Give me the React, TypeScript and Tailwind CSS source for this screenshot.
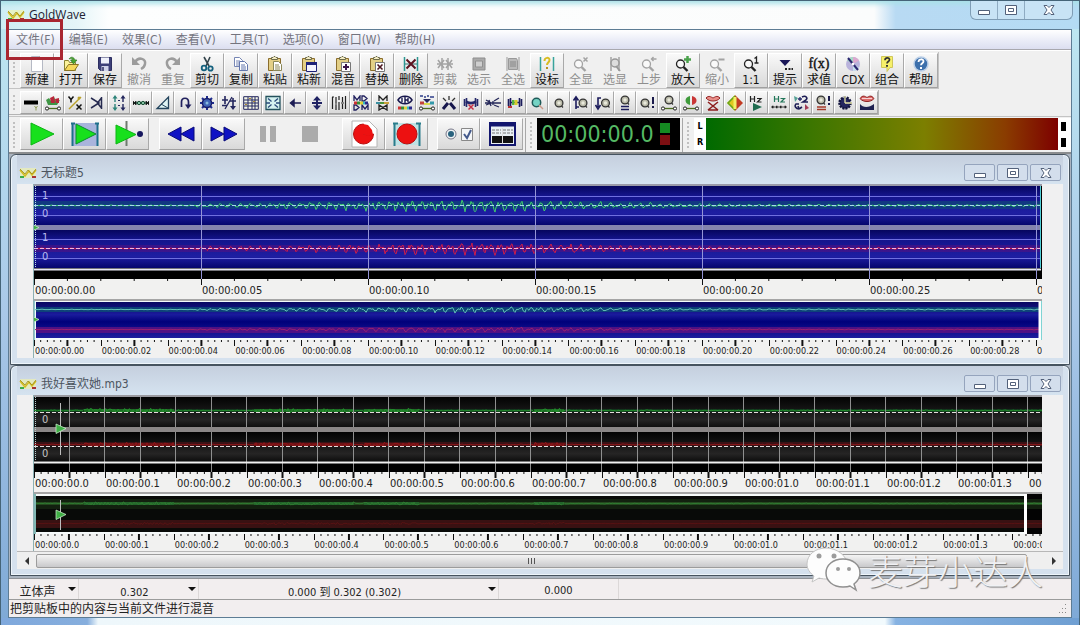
import type { ReactNode } from 'react'
import clsx from 'clsx'

interface ToolItem {
  label: string
  icon: ReactNode
  disabled?: boolean
}

interface EffectItem {
  name: string
  icon: ReactNode
}

const menuItems = ['文件(F)', '编辑(E)', '效果(C)', '查看(V)', '工具(T)', '选项(O)', '窗口(W)', '帮助(H)']

// ---- main toolbar icons (16x16) ----

const Clipboard = ({ children }: { children?: ReactNode }) => (
  <>
    <path d="M1.500 2.500h12v12h-12z" fill="#e3cf86" stroke="#8a6d2c" />
    <path d="M4.500 3.500v-2h1.500l1-1h1l1 1h1.500v2z" fill="#f4edc4" stroke="#6d6b4a" />
    {children}
  </>
)

const Lens = ({ color = '#222', children }: { color?: string; children?: ReactNode }) => (
  <>
    <circle cx="5.500" cy="8" r="4" fill="#fff" fillOpacity=".6" stroke={color} strokeWidth="1.300" />
    <path d="M8.500 11l4 4" stroke={color} strokeWidth="2.400" />
    {children}
  </>
)

const Page = ({ x, y, color }: { x: number; y: number; color: string }) => (
  <g transform={`translate(${x} ${y})`}>
    <path d="M.5.5h5l3 3v6h-8z" fill="#fff" stroke={color} />
    <path d="M2 4h4M2 6h5M2 8h5" stroke={color} />
  </g>
)

const tools: ToolItem[] = [
  { label: '新建', icon: <><path d="M2.500.5h8l3 3v12h-11z" fill="#fff" stroke="#b5b9c4" /><path d="M10.500.5v3h3" fill="#c9a9a9" stroke="#a08c94" /></> },
  { label: '打开', icon: <><path d="M1.500 14.500v-10h4l1 2h6v8z" fill="#fbf39b" stroke="#8a8433" /><path d="M1.500 14.500l4-6h10l-4 6z" fill="#f6d95a" stroke="#8a7423" /><path d="M6 3c2-3 5-2 6 1h2l-3.500 4-3-4h2c-.6-1.400-1.500-1.800-3.500-1z" fill="#49a530" stroke="#2c6f20" strokeWidth=".6" /></> },
  { label: '保存', icon: <><path d="M1.500 1.500h13v13h-11l-2-2z" fill="#3c3f78" stroke="#2c2e60" /><path d="M4 1.500h8v6H4z" fill="#eef0fa" /><path d="M4.500 10h7v5h-7z" fill="#cfd3ea" /><path d="M6 11v4" stroke="#2c2e60" strokeWidth="1.500" /></> },
  { label: '撤消', disabled: true, icon: <><path d="M4 6c4-6 11-3 10 2-.5 3-2 4-4 5" fill="none" stroke="#9c9c9c" strokeWidth="2.500" /><path d="M1 1v8h8z" fill="#9c9c9c" /></> },
  { label: '重复', disabled: true, icon: <><path d="M12 6C8 0 1 3 2 8c.5 3 2 4 4 5" fill="none" stroke="#9c9c9c" strokeWidth="2.500" /><path d="M15 1v8H7z" fill="#9c9c9c" /></> },
  { label: '剪切', icon: <><path d="M5 1l5 9M11 1L7 10" stroke="#34454d" strokeWidth="1.600" /><circle cx="5" cy="12" r="2.300" fill="none" stroke="#13607d" strokeWidth="1.800" /><circle cx="11.500" cy="12.500" r="2.200" fill="none" stroke="#13607d" strokeWidth="1.800" /></> },
  { label: '复制', icon: <><Page x={1} y={1} color="#7686b4" /><Page x={6} y={5} color="#6376ac" /></> },
  { label: '粘贴', icon: <Clipboard><Page x={6} y={5} color="#8a8758" /></Clipboard> },
  { label: '粘新', icon: <Clipboard><path d="M5.500 6.500h10v9h-10z" fill="#f4f4ff" stroke="#1d2178" /><path d="M5 7.500h11" stroke="#1d2178" strokeWidth="3" /></Clipboard> },
  { label: '混音', icon: <Clipboard><path d="M6.500 6.500h9v9h-9z" fill="#fff" stroke="#777" /><path d="M11 8v6M8 11h6" stroke="#3b174b" strokeWidth="2" /></Clipboard> },
  { label: '替换', icon: <Clipboard><path d="M6.500 6.500h9v9h-9z" fill="#fff" stroke="#777" /><path d="M8.500 8.500l5 5m0-5l-5 5" stroke="#4b1720" strokeWidth="1.600" /></Clipboard> },
  { label: '删除', icon: <><path d="M1.500 1v14M14.500 1v14" stroke="#2d9792" strokeWidth="1.500" /><path d="M2 8h12" stroke="#377" /><path d="M3.500 3.500l9 9m0-9l-9 9" stroke="#5b1320" strokeWidth="2" /></> },
  { label: '剪裁', disabled: true, icon: <><path d="M0 8h16M5 2v12M11 2v12" stroke="#a3a3a3" strokeWidth="1.500" /><path d="M1 4l6 8M1 12l6-8M9 4l6 8M9 12l6-8" stroke="#a3a3a3" strokeWidth="1.500" /></> },
  { label: '选示', disabled: true, icon: <><path d="M2 2h12v12H2z" fill="#aaa" stroke="#8d8d8d" /><path d="M4.500 5h7v6h-7z" fill="#cecece" stroke="#909090" /></> },
  { label: '全选', disabled: true, icon: <><path d="M2 1v14M14 1v14" stroke="#999" /><path d="M3.500 2.500h8l1 2v9h-9z" fill="#b9b9b9" stroke="#999" /><path d="M5 6h6M5 8h6M5 10h6" stroke="#888" /></> },
  { label: '设标', icon: <><path d="M1.500 1v14M14.500 1v14" stroke="#38a39b" strokeWidth="1.500" /><path d="M5.500 5c0-4 5-4 5-1 0 2.500-2.500 2.500-2.500 5" fill="none" stroke="#d9bd22" strokeWidth="2" /><path d="M7 11h2v2H7z" fill="#b8931a" /></> },
  { label: '全显', disabled: true, icon: <Lens color="#a3a3a3"><path d="M10.500 1.500l4 4m0-4l-4 4" stroke="#a3a3a3" strokeWidth="1.500" /></Lens> },
  { label: '选显', disabled: true, icon: <><path d="M4 1v14M12 1v14" stroke="#a3a3a3" strokeWidth="1.500" /><circle cx="8" cy="7" r="4" fill="#ddd" stroke="#999" strokeWidth="1.500" /><path d="M9 10l4 5" stroke="#999" strokeWidth="2" /></> },
  { label: '上步', disabled: true, icon: <Lens color="#a3a3a3"><path d="M15.500 3h-5m2-2l-2 2 2 2" fill="none" stroke="#a3a3a3" strokeWidth="1.400" /></Lens> },
  { label: '放大', icon: <Lens><path d="M12.500 0v7M9 3.500h7" stroke="#4ba24c" strokeWidth="2.500" /></Lens> },
  { label: '缩小', disabled: true, icon: <Lens color="#a3a3a3"><path d="M9.500 3.500h6" stroke="#a3a3a3" strokeWidth="2" /></Lens> },
  { label: '1:1', icon: <Lens><path d="M11.500 2.500l2-1.500v6m-2 0h4" fill="none" stroke="#222" strokeWidth="1.300" /></Lens> },
  { label: '提示', icon: <><path d="M2.500 4h11L8 10z" fill="#1b1859" /><path d="M8 12h2v2H8zM11.500 12h2v2h-2zM14.500 12h1.500v2h-1.500z" fill="#222" /></> },
  { label: '求值', icon: <text x="8" y="12" textAnchor="middle" fontSize="14" fontFamily="Liberation Serif, serif" fill="#111" stroke="#111" strokeWidth=".4">f(x)</text> },
  { label: 'CDX', icon: <><circle cx="8" cy="8" r="7" fill="#b9b3dc" /><path d="M8 8L2 4.500A7 7 0 018 1z" fill="#a8dbc6" /><path d="M8 8l6 3.500A7 7 0 018 15z" fill="#c5e2ee" /><path d="M8 8V1a7 7 0 016 3.500z" fill="#dba9cf" /><path d="M3 2l10 12" stroke="#2a2670" strokeWidth="2" /><circle cx="8" cy="8" r="1.500" fill="#fff" /></> },
  { label: '组合', icon: <><path d="M2.500.5h11v11H11l-3 4v-4H2.500z" fill="#f6f06a" stroke="#cfc65a" /><path d="M6 4.200c0-3 4.500-3 4.500-.5 0 1.800-2.500 1.800-2.500 3.800" fill="none" stroke="#333" strokeWidth="1.700" /><path d="M7 9h2v1.700H7z" fill="#333" /></> },
  { label: '帮助', icon: <><circle cx="8" cy="8" r="7" fill="#3d70ac" stroke="#bcd0e8" strokeWidth="1.500" /><path d="M5.500 6c0-3.500 5-3.500 5-.8C10.500 7.200 8 7.200 8 9.300" fill="none" stroke="#fff" strokeWidth="1.800" /><path d="M7 11h2v2H7z" fill="#fff" /></> },
]

// ---- effect toolbar icons (16x16) ----

const Knob = ({ x = 8, y = 8, color = '#b9b9a8' }: { x?: number; y?: number; color?: string }) => (
  <>
    <circle cx={x} cy={y} r="3.900" fill={color} stroke="#333" strokeWidth="1.300" />
    <circle cx={x} cy={y} r="1.700" fill="#e9e9dc" />
    <path d={`M${x + 2.5} ${y + 3}l1.500 1.500`} stroke="#333" strokeWidth="1.300" />
  </>
)

const SliderBase = () => (
  <>
    <path d="M2 13.500h12" stroke="#4d6e1f" strokeWidth="1.300" />
    <circle cx="2" cy="13.500" r="1.600" fill="#fff" stroke="#222" />
    <circle cx="14" cy="13.500" r="1.600" fill="#fff" stroke="#222" />
  </>
)

const ColorStrip = ({ y }: { y: number }) => (
  <>
    <path d={`M1 ${y}h3`} stroke="#c33" strokeWidth="3" />
    <path d={`M4 ${y}h3`} stroke="#3a8a35" strokeWidth="3" />
    <path d={`M7 ${y}h3`} stroke="#dfd238" strokeWidth="3" />
    <path d={`M10 ${y}h2`} stroke="#37b7c4" strokeWidth="3" />
    <path d={`M12 ${y}h3`} stroke="#2b2a8c" strokeWidth="3" />
  </>
)

const Barbell = ({ color }: { color: string }) => (
  <path d="M1.500 4v7M3.500 3v9M12.500 3v9M14.500 4v7M3 7.500h10" stroke={color} strokeWidth="1.600" />
)

const Bang = () => <path d="M14 2v7M14 11v2" stroke="#1a1a4b" strokeWidth="2" />

const effects: EffectItem[] = [
  { name: '审查', icon: <><path d="M1 5.500h14v4H1z" fill="#000" /><path d="M11.500 11l1.500 2 1.500-2M13 13v2.500" fill="none" stroke="#8f9a55" /></> },
  { name: '音道混合', icon: <><path d="M1 5l3-2 2 3 3-4 2 4 4-1-3 5H3z" fill="#3f9644" /><path d="M5 3l4-2 1 7H6zM10 4l4-1v5h-3z" fill="#b8263a" /><SliderBase /></> },
  { name: '音道运算', icon: <><path d="M1.500 1.500l2.500 3 2.500-3M4 4v3.500" fill="none" stroke="#111" strokeWidth="1.500" /><path d="M2 14L14 2" stroke="#b9a12b" strokeWidth="1.500" /><circle cx="12" cy="3" r="1.500" fill="#b9a12b" /><path d="M9.500 9.500l5 5m0-5l-5 5" stroke="#111" strokeWidth="1.500" /></> },
  { name: '压缩器', icon: <path d="M2 3l8 5-8 5M12.500 2v12M12 3.500L8.500 8l3.500 4.500" fill="none" stroke="#25294f" strokeWidth="1.500" /> },
  { name: '扩展器', icon: <><path d="M4 0l2.500 3.500h-5zM3.300 3h1.400v4H3.300zM4 16l-2.500-3.500h5zM3.300 9h1.400v4H3.300z" fill="#2c8379" /><path d="M12 0l2.500 3.500h-5zM11.300 3h1.400v4h-1.400zM12 16l-2.500-3.500h5zM11.300 9h1.400v4h-1.400zM7 5h2v1H7zM7 10h2v1H7z" fill="#22265c" /></> },
  { name: '多普勒', icon: <><path d="M0 8h16" stroke="#2c7656" strokeWidth="1.500" /><path d="M0 6l3 4V6L0 10zM16 6l-3 4V6l3 4z" fill="#111" stroke="#111" strokeWidth=".7" /><circle cx="6" cy="8" r="1.700" fill="#83bfa0" stroke="#184d34" /><circle cx="10" cy="8" r="1.700" fill="#83bfa0" stroke="#184d34" /></> },
  { name: '动态', icon: <><path d="M13.500 2v11.500H2z" fill="#dff4f4" stroke="#24445d" strokeWidth="1.300" /><path d="M6 9l7 4" stroke="#24445d" /></> },
  { name: '回声', icon: <><path d="M4.500 12V7c0-5 7-5 7 0v3" fill="none" stroke="#21215e" strokeWidth="1.700" /><path d="M8 9.500h6.500L11 14z" fill="#21215e" /></> },
  { name: '滤波', icon: <><path d="M8 1v14M1 8h14M3 3l10 10M13 3L3 13" stroke="#1f2d8f" strokeWidth="2" /><circle cx="8" cy="8" r="4.600" fill="#3f63b5" stroke="#181c6a" strokeWidth="1.500" /><circle cx="8" cy="8" r="1.500" fill="#8bd" /></> },
  { name: '音量比例', icon: <><path d="M1 5h6M4 1v8M1 10.500h5M9 6h6M12 3v9" stroke="#23265e" strokeWidth="1.600" /><path d="M4 14L11 2" stroke="#23265e" strokeWidth="1.300" /><path d="M9 11h6l-3 4z" fill="#23265e" /></> },
  { name: '均衡表', icon: <><path d="M.7 1.700h14.600v12.600H.7z" fill="#f4f7e8" stroke="#23265e" /><path d="M1 5h14M1 8h14M1 11h14M5 2v12M9 2v12M12 2v12" stroke="#23265e" /><path d="M6 3h2v1H6zM10 6h2v1h-2zM2 9h2v1H2z" fill="#a83" /></> },
  { name: '立体声', icon: <><path d="M1 1.500h14v13H1z" fill="#d5f2f0" stroke="#23515c" strokeWidth="1.300" /><path d="M3 3.500l3.500 3M13 3.500l-3.500 3M3 12.500l3.500-3M13 12.500l-3.500-3M1 8h4M15 8h-4" stroke="#2a4b7a" strokeWidth="1.300" /></> },
  { name: '反转', icon: <path d="M14 8H4M7 5L3.500 8 7 11z" fill="#1c1c54" stroke="#1c1c54" strokeWidth="1.500" /> },
  { name: '反相', icon: <path d="M8 1l4 4.500H9v1.500h4v2H9v1.500h3L8 15l-4-4.500h3V9H3V7h4V5.500H4z" fill="#1f2263" /> },
  { name: '静音缩减', icon: <path d="M1.500 2v12M5 2v6M5 10v5M8 1v4M8 7v8M11.500 2v5M11.500 9v5M14.500 1v13M1 2h2M4 9h2M10 8h3" stroke="#222" strokeWidth="1.200" /> },
  { name: '音调', icon: <><path d="M1 6V1l3 4 3-4v5M9 6V1h2l3 2.500L11 6zM1 15v-5h2l3 2.500L3 15zM9 15v-5l3 4 3-4v5" fill="none" stroke="#20205e" strokeWidth="1.300" /><ColorStrip y={8} /></> },
  { name: '均衡器', icon: <><path d="M4 6V1l4 4 4-4v5M4 15v-5l4 2.500L4 15zM12 10v5l-4-2.500z" fill="none" stroke="#222" strokeWidth="1.300" /><path d="M1 8h4" stroke="#3b8fa0" strokeWidth="2" /><path d="M5 8h4" stroke="#4c9438" strokeWidth="2" /><path d="M9 8h5" stroke="#c9a23a" strokeWidth="2" /></> },
  { name: '参数均衡', icon: <><path d="M1 5c3-5 11-5 14 0-3 5-11 5-14 0z" fill="#fff" stroke="#16164c" strokeWidth="1.500" /><path d="M8 2v6M5 3v4M11 3v4M8 5h3" stroke="#16164c" strokeWidth="1.400" /><ColorStrip y={13} /></> },
  { name: '频谱滤波', icon: <><path d="M1 1h3M5 2h2M8 1h2M11 2h4" stroke="#2e3e8a" strokeWidth="1.500" /><path d="M4 4h8L8 8z" fill="#25275e" /><path d="M1 8h4" stroke="#c3443a" strokeWidth="3" /><path d="M5 9h6" stroke="#d9dc4b" strokeWidth="2" /><path d="M11 8h4" stroke="#39a" strokeWidth="3" /><SliderBase /></> },
  { name: '爆音消除', icon: <><path d="M2 14l5-6M14 14L9 8" stroke="#16164c" strokeWidth="3" /><path d="M8 1v4M2 3l3 3M14 3l-3 3" stroke="#333" strokeWidth="1.300" /></> },
  { name: '降噪', icon: <><Barbell color="#25286a" /><path d="M3 6.500c3 2 7 2 10 0" fill="none" stroke="#25286a" strokeWidth="2.500" /><path d="M5.500 9.500l5 5m0-5l-5 5" stroke="#c43246" strokeWidth="1.500" /></> },
  { name: '平滑器', icon: <path d="M0 8h16M1 5l5 3-5 2M4 5l2 6M9 6l5-3M9 10l5 2M8 6v4" fill="none" stroke="#25285a" strokeWidth="1.300" /> },
  { name: '静音', icon: <><Barbell color="#1c1d5c" /><path d="M5 5h2.500v5H5z" fill="#53b341" /><path d="M7.500 5h3v5h-3z" fill="#d5cf2b" /><path d="M1 11h4v2H1z" fill="#b33" /></> },
  { name: '自动增益', icon: <><circle cx="7.500" cy="7.500" r="4.200" fill="#75d3c4" stroke="#1f5a58" strokeWidth="1.500" /><path d="M10 10l4 4" stroke="#c98" strokeWidth="1.500" /></> },
  { name: '音量', icon: <Knob /> },
  { name: '淡入', icon: <><Knob x={10} /><path d="M3 14V3M.5 5.500L3 2l2.500 3.500M3 12h3" fill="none" stroke="#1c1c5c" strokeWidth="1.600" /></> },
  { name: '淡出', icon: <><Knob x={10.5} /><path d="M6 3H3v9M.5 10L3 14l2.500-4" fill="none" stroke="#1c1c5c" strokeWidth="1.600" /></> },
  { name: '匹配音量', icon: <><Knob y={5} /><path d="M4 11.500h8M4 14.500h8" stroke="#1c1c5c" strokeWidth="1.600" /></> },
  { name: '最大化音量', icon: <><Knob x={6} /><Bang /></> },
  { name: '音量形状', icon: <><Knob y={5} /><SliderBase /></> },
  { name: '声像', icon: <><path d="M7 1v9C1 9 1 2 7 1z" fill="#3f9b3b" /><path d="M9 1v9c6-1 6-8 0-9z" fill="#c93636" /><SliderBase /></> },
  { name: '人声消除', icon: <><path d="M1 3c3-3 5-1 7 0 2-1 4-3 7 0-3 4-11 4-14 0z" fill="#e98e88" stroke="#942323" /><path d="M3 7l10 8M13 7L3 15M3 15h10" stroke="#8c1e1e" strokeWidth="1.600" /></> },
  { name: '立体声宽度', icon: <><path d="M8 0v16L0 8z" fill="#dfc81e" /><path d="M8 0v16l8-8z" fill="#c23a22" /><path d="M8 1L1 8l7 7" fill="none" stroke="#63a51c" strokeWidth="1.500" /><path d="M8 2v12" stroke="#f2ef67" strokeWidth="3" /></> },
  { name: '播放速率', icon: <><path d="M1.500 1v6M1.500 4h4M5.500 1v6M8 3.500h4L8.500 7h4" fill="none" stroke="#222" strokeWidth="1.200" /><path d="M4 8l9 4-9 4z" fill="#1f6c4f" /></> },
  { name: '重新采样', icon: <><path d="M3.500 1v6M3.500 4h4M7.500 1v6M9.500 3.500h4L10 7h4" fill="none" stroke="#23775a" strokeWidth="1.200" /><path d="M0 12h16" stroke="#444" /><path d="M1 12h1.500M5 12h1.500M9 12h1.500M13.500 12H15" stroke="#222" strokeWidth="2.500" /></> },
  { name: '时间弯曲', icon: <><path d="M1 1l4 2-3 4z" fill="#55a095" /><path d="M5 4h4M7 2v4" stroke="#25286a" strokeWidth="1.300" /><path d="M9 2c4-2 6 1 4 3l-3 2h5M6 9H3c-2 2 0 5 3 5M6 14l-1-3M6 14l3-2" fill="none" stroke="#1d1d55" strokeWidth="1.600" /><path d="M12 9l4 4-4 2z" fill="#a33c55" /></> },
  { name: '偏移', icon: <><Knob x={6} y={5} /><path d="M14 1v5M14 8v2" stroke="#1a1a4b" strokeWidth="2" /><path d="M2 12h9M2 14.500h9" stroke="#a43a2a" strokeWidth="1.500" /></> },
  { name: '定时', icon: <><circle cx="8" cy="8" r="5.500" fill="#25275f" stroke="#14163f" strokeWidth="2.500" strokeDasharray="2 1" /><path d="M8 8V1M8 8h7" stroke="#e9e7a8" strokeWidth="1.300" /></> },
  { name: '语音', icon: <><path d="M1 3.500c3-4 5-2 7-1 2-1 4-3 7 1-3 4-11 4-14 0z" fill="#df6d6d" stroke="#8c2020" /><path d="M3 3.500h10" stroke="#f6d4d4" /><path d="M1 15V9c3 4 9 4 14 0v6z" fill="#1d2050" /></> },
]

// ---- waveform generation ----

// Fixed-seed pseudo random so the trace is stable between renders
const noise = (n: number) => {
  const v = Math.sin(n * 12.9898) * 43758.5453
  return (v - Math.floor(v)) * 2 - 1
}

const wavePath = (mid: number, gain: number, seed: number) => {
  let d = `M0 ${mid}`
  for (let x = 1; x <= 1006; x++) {
    const t = x < 430 ? (x - 430) / 190 : (x - 430) / 170
    const env = x < 160 ? 0.1 : 0.2 + Math.exp(-t * t)
    const v = Math.sin(x * 0.63) * 0.55 + Math.sin(x * 1.27 + 1) * 0.35 + noise(x + seed) * 0.35
    d += `L${x} ${(mid + v * env * gain).toFixed(1)}`
  }
  return d
}

const bursts = [[50, 140], [220, 320], [330, 385], [500, 530]]

const burstPath = (mid: number, gain: number, seed: number) => {
  let d = `M0 ${mid}`
  for (let x = 1; x <= 1008; x++) {
    const loud = bursts.some(([from, to]) => x >= from && x <= to)
    const amp = loud ? 1 : 0.25
    d += `L${x} ${(mid + noise(x + seed) * amp * gain).toFixed(1)}`
  }
  return d
}

const burstBand = (y: number, height: number) =>
  bursts.map(([from, to]) => `M${from} ${y}h${to - from}v${height}h${from - to}z`).join('')

const range = (count: number) => Array.from({ length: count }, (_, i) => i)

const GoldWaveLogo = () => (
  <svg className="h-4 w-[18px] shrink-0" viewBox="0 0 18 16" fill="none">
    <path d="M1 3h16v10H1z" fill="#f2f3a6" fillOpacity=".6" />
    <path d="M1 5l5 6 4-5 3 4 4-5" stroke="#d3bc22" strokeWidth="1.500" />
    <path d="M1 4l5 5 3-4 4 4 4-5" stroke="#9a8a1c" strokeWidth=".8" />
    <path d="M1 12h4" stroke="#3cae4a" strokeWidth="2" />
    <path d="M13 12h4" stroke="#a33" strokeWidth="2" />
  </svg>
)

const WindowGlyph = ({ kind }: { kind: 'min' | 'max' | 'close' }) => (
  <svg className="h-3 w-3" viewBox="0 0 12 12" fill="none" stroke="#53617a">
    {kind === 'min' && <path d="M.5 6.500h11v4H.5z" fill="#fff" />}
    {kind === 'max' && (
      <>
        <path d="M.5 1.500h11v9H.5z" fill="#fff" />
        <path d="M3.500 4.500h5v3h-5z" />
      </>
    )}
    {kind === 'close' && <path d="M1 1.500h3l2 2 2-2h3L8 6l3 4.500H8l-2-2-2 2H1L4 6z" fill="#fff" />}
  </svg>
)

const Grip = () => <div className="my-1 mr-[5px] ml-1 w-0.5 self-stretch border-l-2 border-dotted border-[#c0c0c0]" />

const Triangle = () => <path d="M0 0l10 4.500-10 5z" fill="#3fae46" stroke="#d5f5d5" strokeWidth=".7" />

interface RulerProps {
  labels: string[]
  step: number
  ticks: number
  boldEvery: number
  small?: boolean
}

function Ruler({ labels, step, ticks, boldEvery, small }: RulerProps) {
  return (
    <div className={clsx('flex overflow-hidden bg-[#f1f1f0]', small ? 'h-[17px]' : 'h-5')}>
      {labels.map((label) => (
        <div key={label} className="shrink-0" style={{ width: `${(step / 1008) * 100}%` }}>
          <svg className="block h-1.5 w-full" stroke="#111">
            {range(ticks).map((i) => (
              <line
                key={i}
                x1={`${(i / ticks) * 100}%`}
                x2={`${(i / ticks) * 100}%`}
                y1="0"
                y2={i % boldEvery === 0 ? 6 : 2}
                strokeWidth={i % boldEvery === 0 ? 2 : 1}
              />
            ))}
          </svg>
          <div
            className={clsx(
              'pl-px whitespace-nowrap text-[#222]',
              small ? 'text-[9px] leading-[10px]' : 'text-[11px] leading-[11px]',
            )}
          >
            {label}
          </div>
        </div>
      ))}
    </div>
  )
}

function BluePlot() {
  return (
    <div className="relative border-t-2 border-[#9a9aa8]">
      <svg className="block h-[93px] w-full" viewBox="0 0 1008 93" preserveAspectRatio="none" fill="none">
        <defs>
          <linearGradient id="blue" x1="0" y1="0" x2="0" y2="1">
            <stop offset="0" stopColor="#06065e" />
            <stop offset=".25" stopColor="#14148c" />
            <stop offset=".7" stopColor="#1e1ea2" />
            <stop offset="1" stopColor="#06066c" />
          </linearGradient>
        </defs>
        <path d="M0 0h1008v93H0z" fill="#000" />
        <path d="M0 0h1007v39H0z" fill="url(#blue)" />
        <path d="M0 44h1007v38H0z" fill="url(#blue)" />
        <path d="M0 15h1007v8H0z" fill="#0d4f77" fillOpacity=".6" />
        <path d="M0 59h1007v7H0z" fill="#551080" fillOpacity=".55" />
        <path d="M0 10.500h1007M0 29.500h1007M0 53.500h1007M0 72.500h1007" stroke="#6f6fe0" />
        <path d="M0 41.500h1007" stroke="#8584ad" strokeWidth="5" />
        <path d={wavePath(19.5, 5, 3)} stroke="#3fd06b" />
        <path d={wavePath(62.5, 5, 90)} stroke="#d01c48" />
        <path d="M0 19.500h1007" stroke="#a5dbe8" strokeDasharray="4 2" />
        <path d="M0 62.500h1007" stroke="#f3b6df" strokeDasharray="4 2" />
        <path d="M0 83.500h1007" stroke="#e9e9f4" strokeWidth="2" />
        {range(6).map((i) => (
          <path key={i} d={`M${(i + 1) * 167 + 0.5} 0v93`} stroke="#9494d6" />
        ))}
        <path d="M1.500 0v82" stroke="#b7d9ec" strokeDasharray="1 1" />
        <path d="M1006.500 0v82" stroke="#4fd0d8" />
        <g transform="translate(-5 37)">
          <Triangle />
        </g>
      </svg>
      <span className="absolute top-1 left-2 text-[11px] leading-3 text-[#b9b9ee]">1</span>
      <span className="absolute top-[22px] left-2 text-[11px] leading-3 text-[#b9b9ee]">0</span>
      <span className="absolute top-[46px] left-2 text-[11px] leading-3 text-[#b9b9ee]">1</span>
      <span className="absolute top-[65px] left-2 text-[11px] leading-3 text-[#b9b9ee]">0</span>
    </div>
  )
}

function BlueOverview() {
  return (
    <div className="border-t-2 border-[#a5a5a5]">
      <svg className="block h-[39px] w-full" viewBox="0 0 1008 39" preserveAspectRatio="none" fill="none">
        <defs>
          <linearGradient id="blueOver" x1="0" y1="0" x2="0" y2="1">
            <stop offset="0" stopColor="#080860" />
            <stop offset=".35" stopColor="#1a1a9c" />
            <stop offset=".55" stopColor="#00007a" />
            <stop offset="1" stopColor="#1d1d9e" />
          </linearGradient>
        </defs>
        <path d="M0 0h1008v39H0z" fill="#f4fbfb" />
        <path d="M2 1h1003v36H2z" fill="url(#blueOver)" />
        <path d="M2 6h1003v5H2z" fill="#0b5472" fillOpacity=".7" />
        <path d="M2 26h1003v6H2z" fill="#5f1282" fillOpacity=".8" />
        <path d={wavePath(8.5, 2.5, 40)} stroke="#62c2b6" />
        <path d={wavePath(28.5, 2, 55)} stroke="#96216f" />
        <path d="M1005.500 0v39" stroke="#fff" strokeWidth="2" />
        <path d="M1007.500 0v39" stroke="#7fd4d4" />
        <path d="M.5 0v39" stroke="#8cc9cc" />
        <g transform="translate(-5 14)">
          <Triangle />
        </g>
      </svg>
    </div>
  )
}

function DarkPlot() {
  return (
    <div className="relative border-t-2 border-[#9a9aa0]">
      <svg className="block h-[75px] w-full" viewBox="0 0 1008 75" preserveAspectRatio="none" fill="none">
        <defs>
          <linearGradient id="dark" x1="0" y1="0" x2="0" y2="1">
            <stop offset="0" stopColor="#030303" />
            <stop offset=".45" stopColor="#161616" />
            <stop offset=".75" stopColor="#262525" />
            <stop offset="1" stopColor="#0e0e0e" />
          </linearGradient>
        </defs>
        <path d="M0 0h1008v75H0z" fill="#000" />
        <path d="M0 0h1008v30H0z" fill="url(#dark)" />
        <path d="M0 35h1008v29H0z" fill="url(#dark)" />
        <path d="M0 12h1008v3H0z" fill="#11371c" />
        <path d="M0 45h1008v4H0z" fill="#3a1216" />
        <path d={burstBand(12, 3)} fill="#1d6c25" />
        <path d={burstBand(46, 3)} fill="#6e1215" />
        <path d={burstPath(13.5, 2, 7)} stroke="#238f2d" />
        <path d={burstPath(47.5, 2, 31)} stroke="#8f1619" />
        <path d="M0 15.500h1008M0 49.500h1008" stroke="#e4dcdc" strokeDasharray="4 2" />
        {range(28).map((i) => (
          <path key={i} d={`M${Math.round((i + 1) * 35.5) - 0.5} 0v75`} stroke="#8f8f8f" />
        ))}
        <path d="M0 32.500h1008" stroke="#8a8686" strokeWidth="5" />
        <path d="M0 65.500h1008" stroke="#f0f0f0" strokeWidth="2" />
        <path d="M1.500 0v64" stroke="#b7cfcf" strokeDasharray="1 1" />
        <path d="M26.500 6v52" stroke="#bdbdbd" />
        <g transform="translate(22 27)">
          <Triangle />
        </g>
      </svg>
      <span className="absolute top-[17px] left-2 text-[11px] leading-3 text-[#c4c4c4]">0</span>
      <span className="absolute top-[51px] left-2 text-[11px] leading-3 text-[#c4c4c4]">0</span>
    </div>
  )
}

function DarkOverview() {
  return (
    <div className="border-t-2 border-[#a5a5a5]">
      <svg className="block h-10 w-full" viewBox="0 0 1008 40" preserveAspectRatio="none" fill="none">
        <path d="M0 0h1008v40H0z" fill="#f6fafa" />
        <path d="M2 2h988v36H2z" fill="#080a08" />
        <path d="M993 0h15v40h-15z" fill="#030303" />
        <path d="M2 5h988v10H2zM993 5h15v10h-15z" fill="#12200f" />
        <path d="M2 8h988v3H2zM993 8h15v3h-15z" fill="#24481e" />
        <path d="M2 26h988v8H2zM993 26h15v8h-15z" fill="#391112" />
        <path d={burstBand(8, 3)} fill="#22642a" />
        <path d={burstPath(9.5, 1.5, 62)} stroke="#2f7a31" />
        <path d={burstPath(29.5, 1, 13)} stroke="#561112" />
        <path d="M991.500 0v40" stroke="#fff" strokeWidth="3" />
        <path d="M1 0v40" stroke="#82b8b4" strokeWidth="2" />
        <path d="M26.500 6v30" stroke="#bdbdbd" />
        <g transform="translate(22 16)">
          <Triangle />
        </g>
      </svg>
    </div>
  )
}

function SoundWindow({ title, children }: { title: string; children: ReactNode }) {
  return (
    <section className="rounded-t-md border border-[#46535f] bg-[#d5e1ee] px-1.5 pb-1.5 shadow-[inset_0_0_0_1px_#eef5fb]">
      <header className="flex h-[29px] items-center bg-linear-to-b from-[#c5cfde] to-[#d5e3f0] pt-1.5 pl-0.5">
        <GoldWaveLogo />
        <h2 className="ml-1 flex-1 text-xs text-[#4c5560]">{title}</h2>
        <div className="mr-0.5 flex gap-0.5">
          {(['min', 'max', 'close'] as const).map((kind) => (
            <button
              key={kind}
              aria-label={kind}
              className="flex h-[17px] w-[31px] items-center justify-center rounded-xs border border-[#95a4bd] bg-[#d3deec]"
            >
              <WindowGlyph kind={kind} />
            </button>
          ))}
        </div>
      </header>
      <div className="bg-[#f0f0f1]">{children}</div>
    </section>
  )
}

const raised = 'border-t border-r border-b border-l border-t-white border-r-[#a9a9a9] border-b-[#a0a0a0] border-l-white bg-linear-to-b from-[#f9f9f9] to-[#d9d9d9]'

function MainToolbar() {
  return (
    <div className="flex h-[37px] self-start border-r border-b border-[#c4c4c4] pt-px">
      <Grip />
      {tools.map((tool) => (
        <button
          key={tool.label}
          disabled={tool.disabled}
          className={clsx(
            'flex h-[35px] w-[34px] shrink-0 flex-col items-center pt-0.5 text-xs leading-[17px] whitespace-nowrap',
            tool.disabled ? 'border border-transparent text-[#8e8e8e]' : clsx(raised, 'text-[#111]'),
          )}
        >
          <svg className="h-4 w-4 shrink-0 overflow-visible" viewBox="0 0 16 16">{tool.icon}</svg>
          {tool.label}
        </button>
      ))}
    </div>
  )
}

function EffectToolbar() {
  return (
    <div className="flex h-[25px] self-start border-r border-b border-[#b4b4b4] pt-px">
      <Grip />
      {effects.map((fx) => (
        <button key={fx.name} aria-label={fx.name} className={clsx('flex h-[23px] w-[22px] shrink-0 items-center justify-center', raised)}>
          <svg className="h-4 w-4" viewBox="0 0 16 16">{fx.icon}</svg>
        </button>
      ))}
    </div>
  )
}

const ControlButton = ({ name, flat, children }: { name: string; flat?: boolean; children: ReactNode }) => (
  <button
    aria-label={name}
    disabled={flat}
    className={clsx('flex h-8 w-[43px] shrink-0 items-center justify-center', flat ? 'border border-transparent' : raised)}
  >
    <svg className="h-7 w-8" viewBox="0 0 32 28">{children}</svg>
  </button>
)

function ControlBar() {
  return (
    <div className="flex h-9 border-t border-[#c4c4c4] pt-px">
      <Grip />
      <div className="mr-2.5 flex">
        <ControlButton name="播放"><path d="M5 3l23 11L5 25z" fill="#17e01c" stroke="#0cb514" /></ControlButton>
        <ControlButton name="播放选区">
          <path d="M3 3h26v23H3z" fill="#a9b4dc" />
          <path d="M3.500 3v23M28.500 3v23M2 3.500h4M26 3.500h4" stroke="#1f6f8c" strokeWidth="2" />
          <path d="M7 4l20 10L7 24z" fill="#17e01c" stroke="#0a8f2c" />
        </ControlButton>
        <ControlButton name="从光标播放">
          <path d="M14.500 1v25" stroke="#6f7a6f" strokeWidth="2" />
          <path d="M4 5l20 9.500L4 24z" fill="#17e01c" stroke="#0cb514" />
          <circle cx="28" cy="14" r="3" fill="#17175e" />
        </ControlButton>
      </div>
      <div className="mr-[11px] flex">
        <ControlButton name="快退"><path d="M16 7v14L3 14zM29 7v14l-13-7z" fill="#0f12c4" stroke="#090b78" /></ControlButton>
        <ControlButton name="快进"><path d="M3 7v14l13-7zM16 7v14l13-7z" fill="#0f12c4" stroke="#090b78" /></ControlButton>
        <ControlButton name="暂停" flat><path d="M9 6h6v16H9zM19 6h6v16h-6z" fill="#ababab" /></ControlButton>
        <ControlButton name="停止" flat><path d="M8 6h16v16H8z" fill="#ababab" /></ControlButton>
      </div>
      <div className="mr-[9px] flex">
        <ControlButton name="新建录音">
          <path d="M4 1h17l8 8v18H4z" fill="#fff" stroke="#b4b4b4" />
          <path d="M15.500 14V4a10 10 0 1010 10l-5 1z" fill="#ed1111" stroke="#b80d0d" />
          <path d="M15 4l5 1 4 5 1 5-5 1-5-2z" fill="#ed1111" />
        </ControlButton>
        <ControlButton name="录音">
          <path d="M4 3h24v22H4z" fill="#bfe2e4" />
          <path d="M3.500 3v23M28.500 3v23M2 3.500h5M25 3.500h5" stroke="#2a7d8c" strokeWidth="2" />
          <circle cx="16" cy="14" r="10" fill="#ed1111" stroke="#b80d0d" />
        </ControlButton>
      </div>
      <div className="mr-0.5 flex">
        <ControlButton name="属性">
          <circle cx="8" cy="14" r="5" fill="#eef3f5" stroke="#778" />
          <circle cx="8" cy="14" r="3" fill="#29627e" />
          <path d="M18.500 8.500h11v12h-11z" fill="#f4f6f8" stroke="#888" />
          <path d="M21 14l3 4 4-8" fill="none" stroke="#445a8c" strokeWidth="2" />
        </ControlButton>
        <ControlButton name="窗口布局">
          <path d="M4 3h25v22H4z" fill="#e9f0f4" stroke="#12166e" strokeWidth="2" />
          <path d="M4 4.500h25" stroke="#12166e" strokeWidth="4" />
          <path d="M6 10h9M6 13h9M17 10h10M17 13h10" stroke="#777" strokeDasharray="3 1" />
          <path d="M6 16h21v7H6z" fill="#111" />
          <path d="M16.500 8v16" stroke="#ddd" />
        </ControlButton>
      </div>
      <div className="flex border-l border-[#a8a8a8]">
        <Grip />
        <div className="flex h-8 w-[143px] items-center bg-black pl-1">
          <output className="w-[118px] text-[23px] leading-8 whitespace-nowrap text-[#55b964]">00:00:00.0</output>
          <span className="ml-px flex flex-col gap-0.5">
            <i className="h-2.5 w-2.5 bg-[#158a22]" />
            <i className="h-2.5 w-2.5 bg-[#7e0f12]" />
          </span>
        </div>
      </div>
      <div className="ml-0.5 flex flex-1 border-l border-[#a8a8a8]">
        <Grip />
        <div className="flex h-8 flex-1 bg-white">
          <div className="flex w-3 flex-col items-center justify-around text-[9px] leading-3 font-bold text-black">
            <span>L</span>
            <span>R</span>
          </div>
          <div className="flex-1 bg-[linear-gradient(90deg,#006a00,#3c7600_30%,#7c7f00_62%,#8a3c00_85%,#7d0000)]" />
          <div className="flex w-[13px] flex-col items-start justify-around pl-[3px]">
            <i className="h-[9px] w-[5px] bg-black" />
            <i className="h-[9px] w-[5px] bg-black" />
          </div>
        </div>
      </div>
    </div>
  )
}

const statusSelects = [
  { id: 'channel', value: '立体声', box: 'w-[70px]', text: 'text-xs pr-3' },
  { id: 'length', value: '0.302', box: 'w-[120px]', text: 'text-[11px] pr-2' },
  { id: 'selection', value: '0.000 到 0.302 (0.302)', box: 'w-[300px]', text: 'text-[11px] pr-2' },
]

function StatusBar() {
  return (
    <footer className="border-t border-[#8f9398] bg-[#f2eeef] text-[#222]">
      <div className="flex h-5 items-center">
        {statusSelects.map((s) => (
          <div key={s.id} className={clsx('relative h-full border-r border-[#dcd8d8]', s.box)}>
            <select
              aria-label={s.id}
              className={clsx('h-full w-full appearance-none bg-transparent [text-align-last:center]', s.text)}
            >
              <option>{s.value}</option>
            </select>
            <svg className="pointer-events-none absolute top-[7px] right-0.5 h-1.5 w-2" viewBox="0 0 8 6">
              <path d="M0 1h8L4 5z" fill="#111" />
            </svg>
          </div>
        ))}
        <span className="h-full w-[120px] border-r border-[#dcd8d8] text-center text-[11px] leading-6">0.000</span>
      </div>
      <div className="flex h-[18px] items-center border-t border-[#9b9b9b] pl-px text-xs">
        <span className="flex-1">把剪贴板中的内容与当前文件进行混音</span>
        <svg className="mr-1 h-2.5 w-2.5" viewBox="0 0 10 10">
          <path d="M8 0h1v1H8zM5 4h1v1H5zM8 4h1v1H8zM2 8h1v1H2zM5 8h1v1H5zM8 8h1v1H8z" fill="#8a8a8a" />
        </svg>
      </div>
    </footer>
  )
}

const pad = (n: number) => String(n).padStart(2, '0')
const tenths = range(15).map((i) => `00:00:${pad(Math.floor(i / 10))}.${i % 10}`)

export default function App() {
  return (
    <main className="relative min-h-screen border border-[#456478] bg-linear-to-b from-[#bfe9f2] via-[#a9c8e8] to-[#7ea9d6] font-['DejaVu_Sans_Condensed','Noto_Sans_CJK_SC',sans-serif]">
      {/* Title bar */}
      <header className="flex h-7 bg-[linear-gradient(90deg,#cfeef4,#e4f5f8_7%,#fdfefe_10%,#fbfcfc_81%,#b8daf3_83%,#b4dbf4)] shadow-[inset_0_6px_5px_-3px_#a9e1e8]">
        <div className="flex flex-1 items-start pt-1.5 pl-1.5">
          <GoldWaveLogo />
          <h1 className="ml-1 font-['Open_Sans',sans-serif] text-xs leading-4 text-[#223]">GoldWave</h1>
        </div>
        <div className="mr-1.5 flex h-[19px] rounded-b-md border border-t-0 border-[#7f9db5] bg-[#c8e3f5]">
          <button aria-label="最小化" className="flex w-[27px] items-center justify-center border-r border-[#8fabc2]"><WindowGlyph kind="min" /></button>
          <button aria-label="最大化" className="flex w-[27px] items-center justify-center border-r border-[#8fabc2]"><WindowGlyph kind="max" /></button>
          <button aria-label="关闭" className="flex w-[47px] items-center justify-center"><WindowGlyph kind="close" /></button>
        </div>
      </header>

      <div className="mx-[7px] border border-[#5d7c94] bg-[#f0f0f0]">
        <nav className="flex h-5 items-center border-b border-[#a8a8ae] bg-linear-to-b from-white via-[#eceef8] to-[#dcdff0] text-xs text-[#74747e]">
          {menuItems.map((item) => (
            <button key={item} className="px-[7px] leading-5 whitespace-nowrap">{item}</button>
          ))}
        </nav>

        <div className="flex flex-col gap-px border-t border-white pt-px">
          <MainToolbar />
          <EffectToolbar />
          <ControlBar />
        </div>

        {/* MDI area */}
        <div className="border-t-2 border-[#8a8c8e] bg-[#aab4c0] px-px pb-0.5">
          <SoundWindow title="无标题5">
            <div className="mr-[21px] ml-4 border-l border-[#8cb0b4] pb-px">
              <BluePlot />
              <Ruler labels={range(7).map((i) => `00:00:00.${pad(i * 5)}`)} step={167} ticks={5} boldEvery={5} />
              <BlueOverview />
              <Ruler labels={range(16).map((i) => `00:00:00.${pad(i * 2)}`)} step={66.8} ticks={10} boldEvery={5} small />
            </div>
          </SoundWindow>
          <SoundWindow title="我好喜欢她.mp3">
            <div className="mr-[21px] ml-4 border-l border-[#8cb0b4]">
              <DarkPlot />
              <Ruler labels={tenths} step={71} ticks={10} boldEvery={5} />
              <DarkOverview />
              <Ruler labels={tenths} step={69.9} ticks={10} boldEvery={5} small />
            </div>
            <div className="flex h-[18px] items-center border-t border-[#b7b7b7] bg-[#efefef]">
              <button aria-label="向左滚动" className="flex w-[19px] justify-center">
                <svg className="h-2 w-1.5" viewBox="0 0 6 8"><path d="M5 0v8L1 4z" fill="#333" /></svg>
              </button>
              <div className="flex h-3.5 flex-1 items-center justify-center gap-0.5 rounded-xs border border-[#9c9c9c] bg-linear-to-b from-[#f4f4f4] to-[#c9c9cb]">
                <i className="h-1.5 w-px bg-[#555]" />
                <i className="h-1.5 w-px bg-[#555]" />
                <i className="h-1.5 w-px bg-[#555]" />
              </div>
              <button aria-label="向右滚动" className="flex w-9 justify-end pr-1.5">
                <svg className="h-2 w-1.5" viewBox="0 0 6 8"><path d="M1 0v8l4-4z" fill="#333" /></svg>
              </button>
            </div>
          </SoundWindow>
        </div>
        <StatusBar />
      </div>
      <div className="h-[7px] bg-[linear-gradient(90deg,#7fa8dc,#86aedd_8%,#eef7fb_9%,#f2fafd_82%,#86b2e2_83%,#6f9fd2)]" />

      {/* Highlight round the file menu */}
      <div className="pointer-events-none absolute top-[18px] left-[5px] h-[41px] w-[57px] border-3 border-[#a92631]" />

      {/* Watermark */}
      <div className="pointer-events-none absolute right-9 bottom-8 flex items-center gap-1.5">
        <svg className="h-[46px] w-[56px]" viewBox="0 0 56 46">
          <path d="M20 1C9 1 1 8 1 17c0 5 3 9 7 12l-2 6 7-4c3 1 6 1 9 1 11 0 19-7 19-15S31 1 20 1z" fill="#fdfdfd" stroke="#c4c4c4" />
          <circle cx="13" cy="9" r="2.500" fill="#9c9c9c" />
          <circle cx="28" cy="9" r="2.500" fill="#9c9c9c" />
          <path d="M37 12c-10 0-17 6-17 14s7 14 17 14c3 0 5 0 7-1l6 4-2-6c4-3 6-7 6-11 0-8-7-14-17-14z" fill="#fdfdfd" stroke="#909090" strokeWidth="1.500" />
          <circle cx="32" cy="22" r="2" fill="#9c9c9c" />
          <circle cx="43" cy="22" r="2" fill="#9c9c9c" />
        </svg>
        <span className="font-['Noto_Sans_CJK_SC',sans-serif] text-[35px] leading-[46px] font-light text-[#f0f1f4] text-shadow-[1px_1px_1px_#777]">麦芽小达人</span>
      </div>
    </main>
  )
}
